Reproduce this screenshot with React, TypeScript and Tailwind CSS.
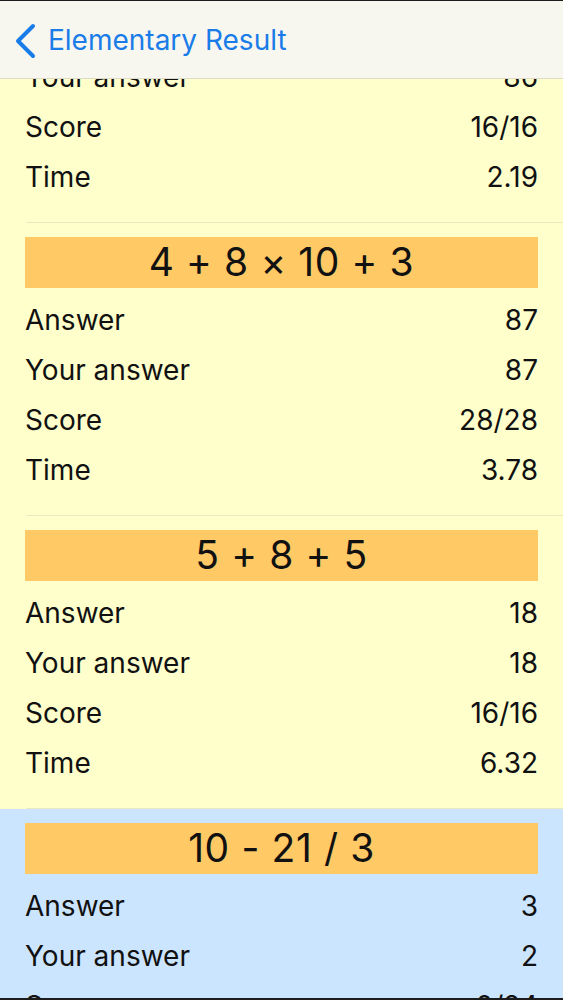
import React from "react";

type Problem = {
  question: string;
  answer: string;
  yours: string;
  score: string;
  time: string;
  selected?: boolean;
};

const problems: Problem[] = [
  { question: "7 × 12 + 2", answer: "86", yours: "86", score: "16/16", time: "2.19" },
  { question: "4 + 8 × 10 + 3", answer: "87", yours: "87", score: "28/28", time: "3.78" },
  { question: "5 + 8 + 5", answer: "18", yours: "18", score: "16/16", time: "6.32" },
  { question: "10 - 21 / 3", answer: "3", yours: "2", score: "0/24", time: "4.05", selected: true },
];

const Row = ({ label, value }: { label: string; value: string }) => (
  <div className="flex h-[50px] items-center justify-between pl-[25px] pr-[25px] text-[28px] text-[#111]">
    <span>{label}</span>
    <span>{value}</span>
  </div>
);

const ResultCell = ({ p }: { p: Problem }) => (
  <div className={p.selected ? "bg-[#cce5ff]" : "bg-[#ffffcc]"}>
    <div className="pt-[14px] pb-[20px]">
      <div className="mx-[25px] flex h-[51px] items-center justify-center bg-[#ffc966] text-[39px] tracking-[0.6px] text-[#111]">
        {p.question}
      </div>
      <div className="mt-[7px]">
        <Row label="Answer" value={p.answer} />
        <Row label="Your answer" value={p.yours} />
        <Row label="Score" value={p.score} />
        <Row label="Time" value={p.time} />
      </div>
    </div>
    <div className="bg-[#ffffcc] pl-[26px]">
      <div className="h-px bg-[#ebe8c4]" />
    </div>
  </div>
);

export default function App() {
  return (
    <div className="relative h-[1000px] overflow-hidden bg-[#ffffcc] font-['Inter','Noto_Sans',sans-serif]">
      {/* nav bar */}
      <div className="absolute inset-x-0 top-0 z-10 flex h-[79px] items-center gap-[10px] border-t border-b border-t-[#1c1c1c] border-b-[#dedbc8] bg-[#f7f7f0] pl-[14px]">
        <svg width="24" height="36" viewBox="0 0 24 36" className="mt-[2px]">
          <path d="M19 3 L4 18 L19 33" fill="none" stroke="#1a7ce8" strokeWidth="4" strokeLinecap="round" strokeLinejoin="round" />
        </svg>
        <span className="text-[28px] text-[#1a7ce8]">Elementary Result</span>
      </div>

      <div className="-mt-[70px]">
        {problems.map((p) => (
          <ResultCell key={p.question} p={p} />
        ))}
      </div>

      <div className="absolute inset-x-0 bottom-0 h-[2px] bg-[#1c1c1c]" />
    </div>
  );
}
